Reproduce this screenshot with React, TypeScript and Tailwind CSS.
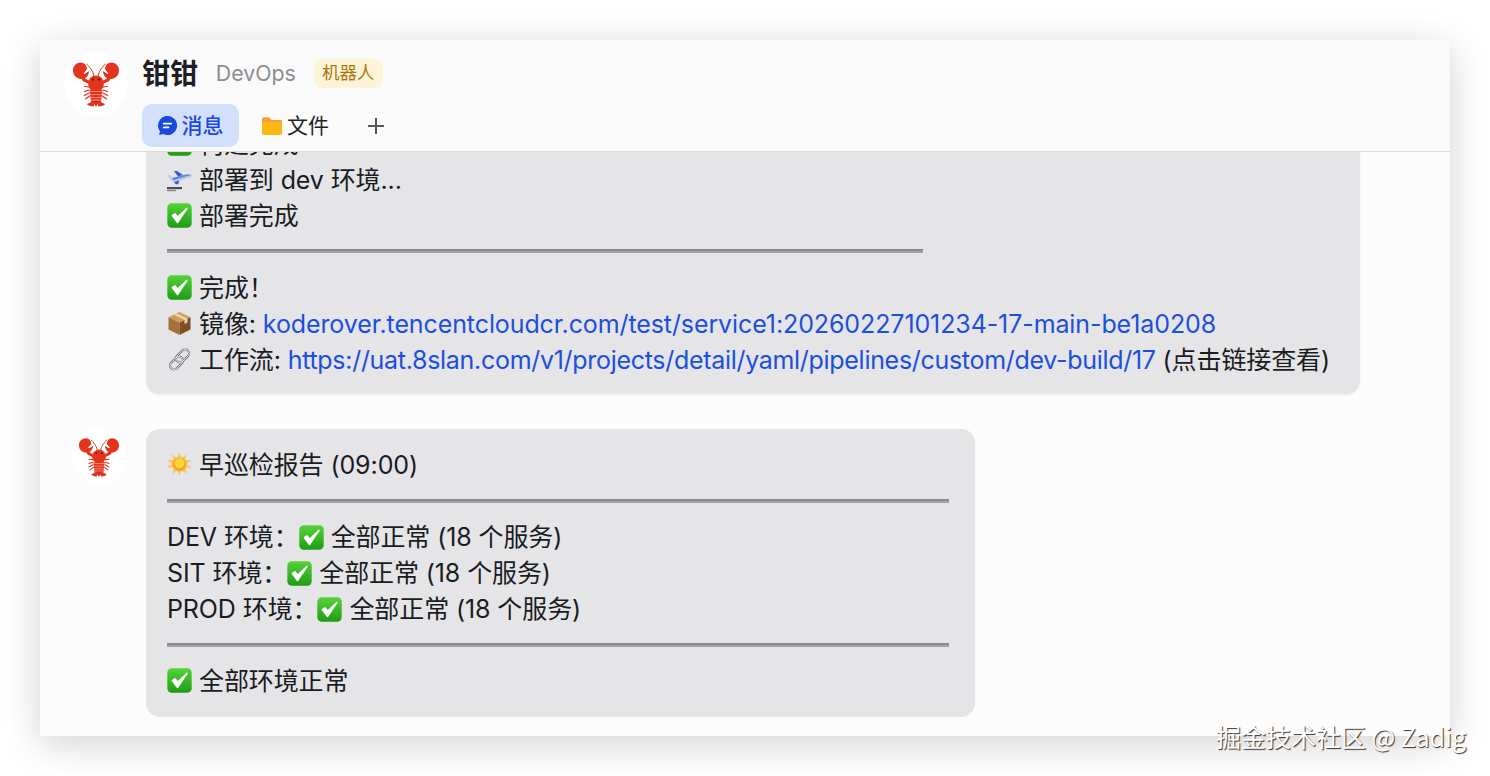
import type { ReactNode } from "react";

const Lobster = ({ className }: { className: string }) => (
	<svg viewBox="0 0 46 46" className={className}>
		<defs>
			<g id="lobster-side">
				<path d="M8 1.500c-4.500 0-8 3.500-8 8 0 4.800 3.500 8.300 8.500 8.600l1.500 2.200 5 2.300 1.500-2.500-4.500-2.800c2.500-1.500 4-4 4-7.300l-4.300 3-1.200-.8 3.800-4.400C13.200 3.500 11 1.500 8 1.500z" fill="#e5341d" />
				<path d="M21 15C20 10 17 6 13.500 3" fill="none" stroke="#c92a14" strokeWidth=".9" />
				<path d="M16 29l-4.500 1.500M16 32l-4.500 2.500M16.500 35l-4 3M16 26l-4.500-.5" stroke="#e5341d" strokeWidth="1.200" strokeLinecap="round" />
				<path d="M20 40l-6 3.200c1.800 1.700 4.500 2.500 7 2l1-5z" fill="#e5341d" />
			</g>
		</defs>
		<use href="#lobster-side" />
		<use href="#lobster-side" transform="matrix(-1 0 0 1 46 0)" />
		<ellipse cx="23" cy="22.500" rx="8" ry="8" fill="#e5341d" />
		<path d="M16.500 29h13L28 41H18z" fill="#e5341d" />
		<path d="M16.500 30.500h13M17 33.500h12M17.500 36.500h11M18 39h10" stroke="#f7a08c" strokeWidth=".8" />
		<circle cx="20" cy="18.500" r="1" fill="#4a120a" />
		<circle cx="26" cy="18.500" r="1" fill="#4a120a" />
		<path d="M20 40l3 6 3-6z" fill="#d52d17" />
	</svg>
);

const Check = ({ className = "" }: { className?: string }) => (
	<svg viewBox="0 0 25 25" className={`h-[25px] w-[25px] shrink-0 ${className}`}>
		<defs>
			<linearGradient id="check-bg" x1="0" y1="0" x2="0" y2="1">
				<stop offset="0" stopColor="#55d338" />
				<stop offset="1" stopColor="#1f9c16" />
			</linearGradient>
		</defs>
		<rect x=".3" y=".3" width="24.400" height="24.400" rx="4.500" fill="url(#check-bg)" />
		<path d="M5.300 12.600l5.200 6.900L20 5.300l-9.300 8.700-2.800-3.300z" fill="#fff" stroke="#fff" strokeWidth="1.400" strokeLinejoin="round" />
	</svg>
);

const Plane = () => (
	<svg viewBox="0 0 25 25" className="h-[25px] w-[25px] shrink-0">
		<path d="M0 7.500l2.200.3 3.600 3.200L19.500 7.500c2.500-.6 5.500-.2 5.500.9 0 1-2 2-4 2.600L8 15c-1.600.4-2.700 0-3.700-.9z" fill="#b7cbee" />
		<path d="M7 4.300l2.500-.5 6.700 4.300-5 1.500zM7 14.900l5.300-1.500-1 3.600-2.500.6z" fill="#2f5fc0" />
		<path d="M5 11.100L20 7.300l3.800.7L6.500 13.300z" fill="#5c88d6" />
		<rect x="0" y="20" width="15" height="2.200" fill="#4c4c52" />
		<rect x="0" y="22.800" width="9" height="1.400" fill="#85858b" />
	</svg>
);

const Box = () => (
	<svg viewBox="0 0 25 25" className="h-[25px] w-[25px] shrink-0">
		<path d="M12.500 1L23.500 6.200 12.500 11.500 1.500 6.200z" fill="#d29a5c" />
		<path d="M1.500 6.200l11 5.300V24l-11-5.500z" fill="#a86f38" />
		<path d="M23.500 6.200l-11 5.300V24l11-5.500z" fill="#7e4f27" />
		<path d="M6.500 3.700l11 5.300v4l3-1.500V7.600l-11-5.300z" fill="#efd3a6" />
	</svg>
);

const Chain = () => (
	<svg viewBox="0 0 25 25" className="h-[25px] w-[25px] shrink-0" fill="none">
		<g stroke="#6f7276" strokeWidth="2.200">
			<rect x="11.500" y="1.500" width="8" height="15" rx="4" transform="rotate(45 15.500 9)" />
			<rect x="5.500" y="8.500" width="8" height="15" rx="4" transform="rotate(45 9.500 16)" />
		</g>
		<g stroke="#e8e9ea" strokeWidth=".9">
			<rect x="11.500" y="1.500" width="8" height="15" rx="4" transform="rotate(45 15.500 9)" />
			<rect x="5.500" y="8.500" width="8" height="15" rx="4" transform="rotate(45 9.500 16)" />
		</g>
	</svg>
);

const Sun = () => (
	<svg viewBox="0 0 25 25" className="h-[25px] w-[25px] shrink-0">
		<path d="M12.500 0l2 6 5-3.800-1.500 6 6.500-.2-5 4 5 3.500-6.300.3 1.500 6.200-5.200-3.800-2 6-2-6-5.200 3.800 1.500-6.200L0 15.500l5-3.500-5-4 6.500.2L5 2.200 10 6z" fill="#f7c66d" />
		<circle cx="12.500" cy="12.300" r="6.800" fill="#f9a51a" />
		<circle cx="12.500" cy="11.300" r="5" fill="#ffd53a" />
	</svg>
);

const Line = ({ icon, children }: { icon?: ReactNode; children: ReactNode }) => (
	<div className="flex h-9 items-center gap-[7px] whitespace-nowrap">
		{icon && <span className="-mt-[2px]">{icon}</span>}
		<span className="pt-[2px]">{children}</span>
	</div>
);

const Rule = ({ className }: { className: string }) => (
	<div className="flex h-9 items-center">
		<div className={`h-[4px] border-t-2 border-b-2 border-t-[#8b8b8d] border-b-[#a3a3a5] ${className}`} />
	</div>
);

const Link = ({ children, className = "" }: { children: ReactNode; className?: string }) => (
	<span className={`text-[#1c4fdc] ${className}`}>{children}</span>
);

const InlineCheck = () => <Check className="mr-[7px] inline-block align-[-4px]" />;

export default function App() {
	return (
		<div
			className="relative h-[776px] w-[1490px] overflow-hidden bg-white p-10 text-[25px] tracking-[-0.1px] text-[#1a1c1f]"
			style={{ fontFamily: 'Inter, "Noto Sans CJK SC", sans-serif' }}
		>
			<div className="flex h-full flex-col overflow-hidden bg-[#fcfcfc] shadow-[0_8px_36px_rgba(0,0,0,0.18)]">
				<header className="relative z-10 flex h-[112px] shrink-0 border-b border-[#d9d9dc] bg-[#fafafa]">
					<div className="ml-[24px] mt-[12px] flex h-[64px] w-[64px] shrink-0 items-center justify-center rounded-full bg-white">
						<Lobster className="h-[46px] w-[46px]" />
					</div>
					<div className="ml-[14px] flex flex-col">
						<div className="mt-[19px] flex h-[30px] items-center">
							<span className="text-[28px] font-bold leading-none text-[#1c1f23]">钳钳</span>
							<span className="ml-[18px] text-[21.300px] tracking-normal text-[#8a8d92]">DevOps</span>
							<span className="ml-[18px] -mt-[1px] flex h-[29px] w-[69px] items-center justify-center rounded-[8px] bg-[#fdf3d6] text-[17.500px] text-[#a5780f]">
								机器人
							</span>
						</div>
						<div className="mt-[15px] flex items-center">
							<div className="flex h-[43px] w-[97px] items-center justify-center gap-[5px] rounded-[10px] bg-[#d3e0fb] text-[21px] font-medium text-[#1a49e0]">
								<svg viewBox="0 0 20 20" className="h-[19px] w-[19px]">
									<path d="M10 0a10 10 0 1 1-4.500 18.900L1.200 20l.9-4A10 10 0 0 1 10 0z" fill="#1a49e0" />
									<path d="M6 8h8M6 12h5" stroke="#fff" strokeWidth="1.800" strokeLinecap="round" />
								</svg>
								消息
							</div>
							<div className="ml-[23px] flex items-center gap-[5px] text-[21px] text-[#1f2329]">
								<svg viewBox="0 0 20 18" className="h-[18px] w-[20px]">
									<path d="M0 2.500A2 2 0 0 1 2 .5h5l2.500 2.500H18a2 2 0 0 1 2 2V16a2 2 0 0 1-2 2H2a2 2 0 0 1-2-2z" fill="#fdb713" />
									<path d="M0 2.500A2 2 0 0 1 2 .5h5l2.500 2.500H18a2 2 0 0 1 2 2H0z" fill="#fb9a3a" />
								</svg>
								文件
							</div>
							<svg viewBox="0 0 18 18" className="ml-[38px] h-[18px] w-[18px]">
								<path d="M9 1v16M1 9h16" stroke="#55585c" strokeWidth="2" />
							</svg>
						</div>
					</div>
				</header>
				<main className="min-h-0 flex-1 overflow-hidden">
					<div className="mt-[-44px] flex items-start pl-[106px]">
						<div className="w-[1214px] rounded-[14px] bg-[#e5e5e8] px-[21px] pb-[16px] pt-[18px] shadow-[0_1px_2px_rgba(0,0,0,0.08)]">
							<Line icon={<Check />}>构建完成</Line>
							<Line icon={<Plane />}>部署到 dev 环境...</Line>
							<Line icon={<Check />}>部署完成</Line>
							<Rule className="w-[756px] -translate-y-px" />
							<Line icon={<Check />}>完成！</Line>
							<Line icon={<Box />}>
								镜像: <Link>koderover.tencentcloudcr.com/test/service1:20260227101234-17-main-be1a0208</Link>
							</Line>
							<Line icon={<Chain />}>
								工作流: <Link className="tracking-[-0.3px]">https://uat.8slan.com/v1/projects/detail/yaml/pipelines/custom/dev-build/17</Link> (点击链接查看)
							</Line>
						</div>
					</div>
					<div className="mt-[35px] flex items-start">
						<div className="flex w-[106px] shrink-0 justify-center pl-[12px]">
							<div className="flex h-[56px] w-[56px] items-center justify-center rounded-full bg-white">
								<Lobster className="h-[40px] w-[40px]" />
							</div>
						</div>
						<div className="w-[829px] rounded-[14px] bg-[#e5e5e8] px-[21px] py-[18px]">
							<Line icon={<Sun />}>早巡检报告 (09:00)</Line>
							<Rule className="w-[782px]" />
							<Line>DEV 环境：<InlineCheck />全部正常 (18 个服务)</Line>
							<Line>SIT 环境：<InlineCheck />全部正常 (18 个服务)</Line>
							<Line>PROD 环境：<InlineCheck />全部正常 (18 个服务)</Line>
							<Rule className="w-[782px]" />
							<Line icon={<Check />}>全部环境正常</Line>
						</div>
					</div>
				</main>
			</div>
			<div
				className="absolute left-[1216px] top-[721px] text-[25px] leading-[30px] tracking-normal text-white text-shadow-[1px_1px_1px_rgba(0,0,0,0.8)]"
				style={{ fontFamily: '"Noto Sans CJK SC", sans-serif' }}
			>
				掘金技术社区 @ Zadig
			</div>
		</div>
	);
}
